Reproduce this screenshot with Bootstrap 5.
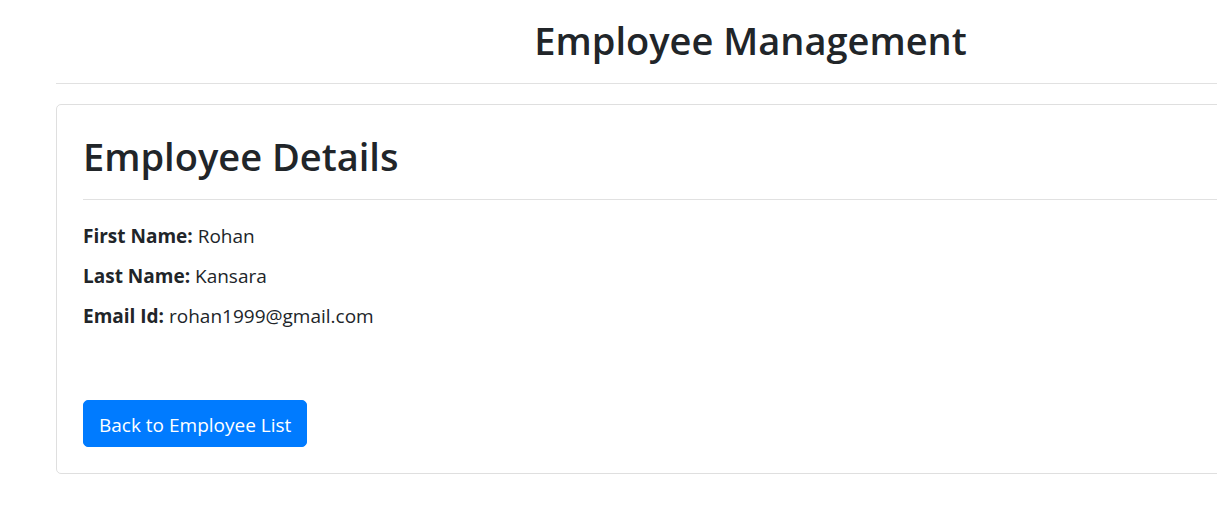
<!DOCTYPE html>
<html lang="en">
<head>
<meta charset="utf-8">
<meta name="viewport" content="width=device-width, initial-scale=1">
<title>Employee Management</title>
<link href="https://cdn.jsdelivr.net/npm/bootstrap@5.3.0/dist/css/bootstrap.min.css" rel="stylesheet">
<style>
  body { font-family: "Open Sans", "Noto Sans", sans-serif; font-size: 19px; line-height: 28px; color: #212529; }
  /* the content column runs on past the right edge of the window */
  .page-clip { overflow-x: hidden; }
  .page-column { margin-left: 56px; margin-right: -228px; }
  .page-title { font-size: 38px; line-height: 48px; font-weight: 600; }
  .rule { border-top: 1px solid #e1e1e1; opacity: 1; margin: 19px 0 0; }
  .details { --bs-card-border-color: #dfdfdf; --bs-card-border-radius: 5px; margin-top: 20px; }
  .details-body { padding: 27px 26px 26px; }
  .details-list { margin: 22px 0 70px; }
  .details-list p { margin-bottom: 12px; }
  .btn-back { --bs-btn-bg: #007bff; --bs-btn-border-color: #007bff; --bs-btn-hover-bg: #0069d9; --bs-btn-font-size: 19px; --bs-btn-line-height: 29px; --bs-btn-border-radius: 5px; padding: 10px 15px 6px; }
</style>
</head>
<body>
<div class="page-clip">
  <div class="page-column">
    <header class="text-center pt-3">
      <h1 class="page-title mb-0">Employee Management</h1>
    </header>
    <hr class="rule">
    <main class="card details">
      <div class="details-body">
        <h2 class="page-title mb-0">Employee Details</h2>
        <hr class="rule">
        <div class="details-list">
          <p><b class="fw-bold">First Name:</b> Rohan</p>
          <p><b class="fw-bold">Last Name:</b> Kansara</p>
          <p class="mb-0"><b class="fw-bold">Email Id:</b> rohan1999@gmail.com</p>
        </div>
        <button type="button" class="btn btn-primary btn-back">Back to Employee List</button>
      </div>
    </main>
  </div>
</div>
<script src="https://cdn.jsdelivr.net/npm/bootstrap@5.3.0/dist/js/bootstrap.bundle.min.js"></script>
</body>
</html>
